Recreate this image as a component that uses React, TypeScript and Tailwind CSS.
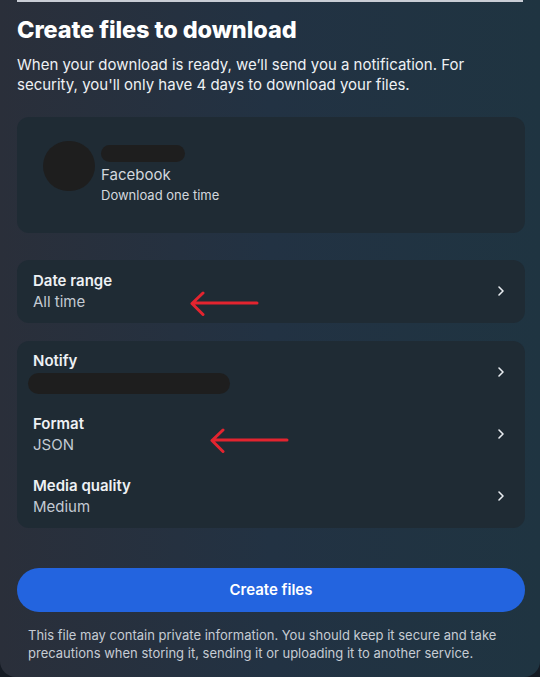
const font = { fontFamily: "Inter, 'Noto Sans', sans-serif" };

function Chevron() {
  return (
    <svg width="8" height="12" viewBox="0 0 8 12" className="shrink-0">
      <path d="M2 2l4 4-4 4" fill="none" stroke="#e8ecf0" strokeWidth="1.6" strokeLinecap="round" strokeLinejoin="round" />
    </svg>
  );
}

function RedArrow({ width }: { width: number }) {
  return (
    <svg width={width} height="28" viewBox={`0 0 ${width} 28`} className="pointer-events-none">
      <path
        d={`M${width - 2} 13H4M14 3L3 13.5l11 11`}
        fill="none"
        stroke="#e3242f"
        strokeWidth="3"
        strokeLinecap="round"
        strokeLinejoin="round"
      />
    </svg>
  );
}

function Row({ title, children }: { title: string; children: React.ReactNode }) {
  return (
    <div className="flex items-center justify-between pl-4 pr-5 h-[62px]">
      <div className="flex flex-col">
        <span className="text-[15px] leading-[21px] font-semibold text-[#eef1f4]">{title}</span>
        {children}
      </div>
      <Chevron />
    </div>
  );
}

export default function App() {
  return (
    <div className="w-[540px] h-[677px] overflow-hidden bg-[#151b24]" style={font}>
      <div className="relative h-full rounded-b-2xl bg-gradient-to-r from-[#2a2f3a] via-[#223243] to-[#1f3441] px-[17px]">
        <div className="h-[2px] w-[506px] bg-[#c9cdd5]" />

        <h1 className="mt-[13px] text-[23.5px] leading-[30px] font-extrabold text-white tracking-[-0.1px]">
          Create files to download
        </h1>
        <p className="mt-[10px] text-[15px] leading-[20px] text-[#eef1f4]">
          When your download is ready, we’ll send you a notification. For security, you'll only have 4 days to download your files.
        </p>

        <div className="mt-[22px] w-[508px] h-[116px] rounded-xl bg-[#1f2b34] flex items-start pt-[24px] pl-[26px]">
          <div className="w-[52px] h-[50px] rounded-full bg-[#1e1e1e]" />
          <div className="flex flex-col ml-[6px]">
            <div className="w-[84px] h-[17px] mt-[4px] rounded-full bg-[#1e1e1e]" />
            <span className="mt-[3px] text-[15px] leading-[20px] text-[#d3d8de]">Facebook</span>
            <span className="text-[13px] leading-[20px] text-[#d3d8de]">Download one time</span>
          </div>
        </div>

        <div className="relative mt-[27px] w-[508px] rounded-xl bg-[#1f2b34] pb-[1px]">
          <Row title="Date range">
            <span className="text-[15px] leading-[21px] text-[#c3cad3]">All time</span>
          </Row>
          <div className="absolute left-[172px] top-[30px]">
            <RedArrow width={70} />
          </div>
        </div>

        <div className="relative mt-[18px] w-[508px] rounded-xl bg-[#1f2b34] pb-[1px]">
          <Row title="Notify">
            <div className="mt-[2px] -ml-[5px] w-[202px] h-[21px] rounded-full bg-[#1e1e1e]" />
          </Row>
          <Row title="Format">
            <span className="text-[15px] leading-[21px] text-[#c3cad3]">JSON</span>
          </Row>
          <Row title="Media quality">
            <span className="text-[15px] leading-[21px] text-[#c3cad3]">Medium</span>
          </Row>
          <div className="absolute left-[192px] top-[86px]">
            <RedArrow width={80} />
          </div>
        </div>

        <button
          type="button"
          className="mt-[40px] w-[508px] h-[44px] rounded-full bg-[#2364df] text-white text-[15px] font-semibold"
        >
          Create files
        </button>

        <p className="mt-[14px] px-[11px] text-[13px] leading-[18px] text-[#c6ccd4]">
          This file may contain private information. You should keep it secure and take precautions when storing it, sending it or uploading it to another service.
        </p>
      </div>
    </div>
  );
}
